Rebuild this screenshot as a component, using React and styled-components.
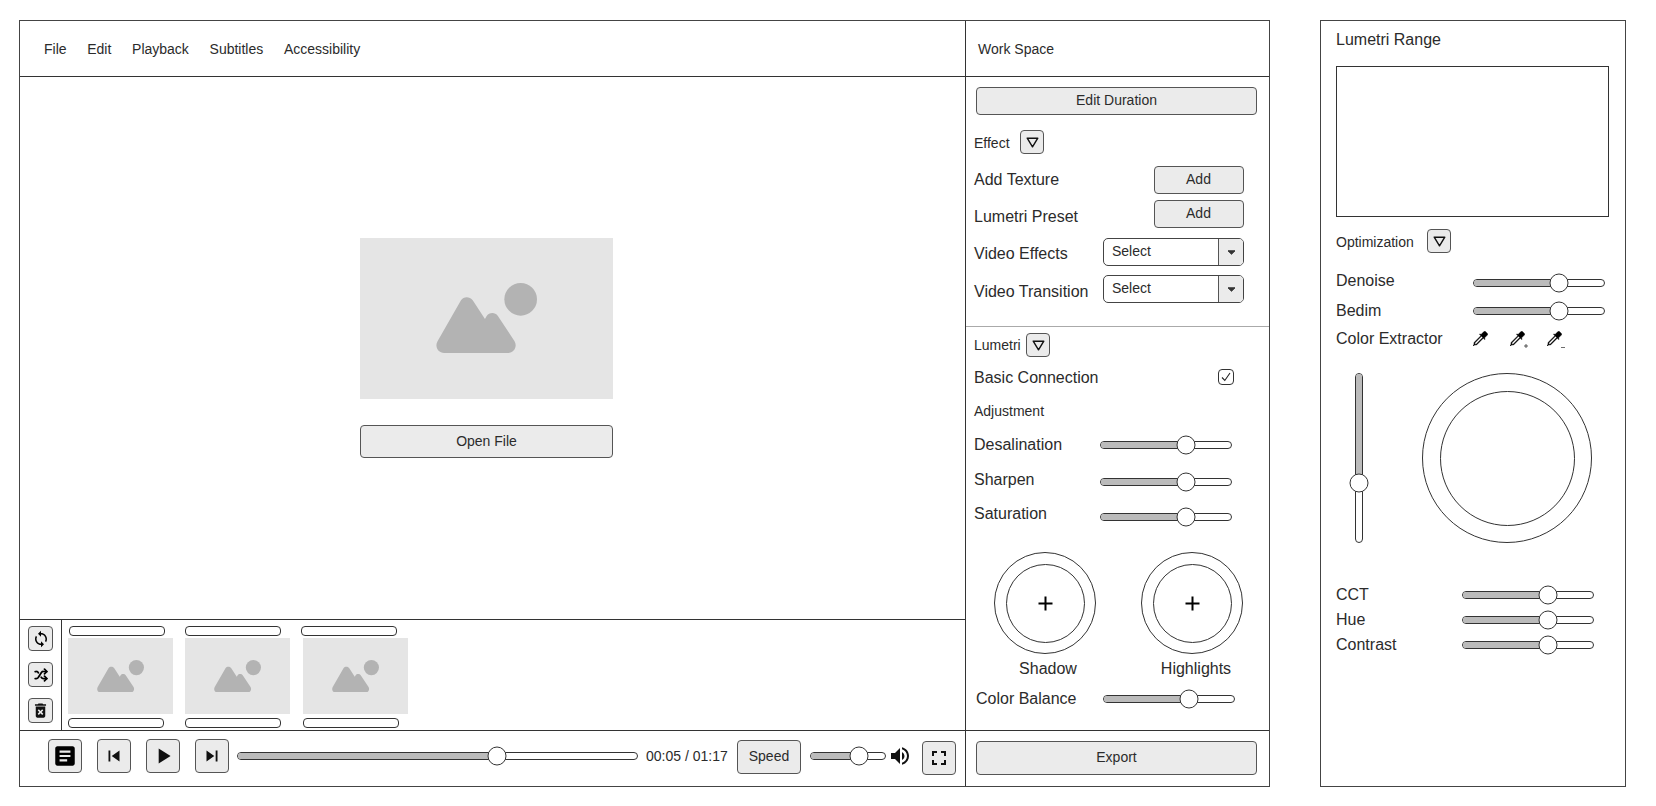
import React from "react"
import styled, { createGlobalStyle } from "styled-components"
import {
  MdSync,
  MdDeleteForever,
  MdArticle,
  MdSkipPrevious,
  MdPlayArrow,
  MdSkipNext,
  MdVolumeUp,
  MdFullscreen,
} from "react-icons/md"
import { BsEyedropper } from "react-icons/bs"
import { Shuffle } from "lucide-react"

const GlobalStyle = createGlobalStyle`
  html, body {
    margin: 0;
    padding: 0;
    background: #fff;
  }
  * {
    box-sizing: border-box;
  }
`

const Page = styled.div`
  width: 1656px;
  height: 806px;
  padding: 20px 0 0 19px;
  display: flex;
  font-family: "Liberation Sans", Arial, sans-serif;
  color: #2b2b2b;
  overflow: hidden;
`

const Frame = styled.div`
  width: 1251px;
  height: 767px;
  display: flex;
  border: 1px solid #444;
`

const LeftColumn = styled.div`
  width: 946px;
  display: flex;
  flex-direction: column;
  border-right: 1px solid #333;
`

const MenuBar = styled.nav`
  height: 56px;
  flex: none;
  display: flex;
  align-items: center;
  gap: 20.7px;
  padding-left: 24px;
  font-size: 14px;
  border-bottom: 1px solid #333;
`

const Preview = styled.div`
  height: 543px;
  flex: none;
  padding: 161px 0 0 340px;
  border-bottom: 1px solid #333;
`

const Placeholder = styled.div`
  width: ${p => p.$w}px;
  height: ${p => p.$h}px;
  background: #e5e5e5;
  display: flex;
  align-items: center;
  justify-content: center;
`

const Button = styled.button`
  display: flex;
  align-items: center;
  justify-content: center;
  padding: 0 0 ${p => p.$lift || 0}px;
  flex: none;
  font-family: inherit;
  font-size: 14px;
  color: #2b2b2b;
  background: #ebebeb;
  border: 1px solid #555;
  border-bottom-width: 1.5px;
  border-radius: 4px;
  width: ${p => p.$w}px;
  height: ${p => p.$h}px;
`

const OpenButton = styled(Button)`
  margin-top: 26px;
`

const Bin = styled.div`
  height: 111px;
  flex: none;
  display: flex;
  border-bottom: 1px solid #333;
`

const BinTools = styled.div`
  width: 42px;
  padding: 6px 0 0 8px;
  display: flex;
  flex-direction: column;
  gap: 11px;
  border-right: 1px solid #333;
`

const BinStrip = styled.div`
  display: flex;
  gap: 12.4px;
  padding: 6px 0 0 6px;
`

const Clip = styled.div`
  width: 105px;
  display: flex;
  flex-direction: column;
`

const Pill = styled.div`
  width: 96px;
  height: 10px;
  margin-left: ${p => p.$shift}px;
  border: 1px solid #333;
  border-radius: 4px;
  background: #fff;
`

const ClipImage = styled(Placeholder)`
  margin: 2px 0 4px;
`

const Transport = styled.div`
  height: 55px;
  flex: none;
  display: flex;
  align-items: flex-start;
  padding: 8px 0 0 28px;
`

const PlayButtons = styled.div`
  display: flex;
  gap: 15px;
`

const SliderSlot = styled.div`
  height: 34px;
  display: flex;
  align-items: center;
  margin-left: ${p => p.$ml}px;
`

const TimeText = styled.span`
  width: 83px;
  font-size: 14px;
  margin-left: 8px;
  white-space: nowrap;
`

const SpeedButton = styled(Button)`
  margin: 1px 0 0 8px;
`

const SpeakerSlot = styled.div`
  height: 34px;
  display: flex;
  align-items: center;
  margin-left: 2px;
  color: #111;
  font-size: 24px;
`

const FullButton = styled(Button)`
  margin: 2px 0 0 10px;
`

const Track = styled.div`
  position: relative;
  flex: none;
  width: ${p => p.$w}px;
  height: 8px;
  background: #fff;
  border: 1px solid #333;
  border-bottom-width: 1.5px;
  border-radius: 4px;
`

const TrackFill = styled.div`
  width: ${p => p.$value}%;
  height: 100%;
  background: #bbb;
  border-radius: 3px 0 0 3px;
`

const Thumb = styled.div`
  position: absolute;
  top: 50%;
  left: ${p => p.$value}%;
  width: 19px;
  height: 19px;
  transform: translate(-50%, -50%);
  background: #fff;
  border: 1px solid #333;
  border-radius: 50%;
`

const VTrack = styled.div`
  position: relative;
  flex: none;
  width: 8px;
  height: 170px;
  background: #fff;
  border: 1px solid #333;
  border-radius: 4px;
`

const VTrackFill = styled.div`
  width: 100%;
  height: ${p => p.$value}%;
  background: #bbb;
  border-radius: 3px 3px 0 0;
`

const VThumb = styled(Thumb)`
  top: ${p => p.$value}%;
  left: 50%;
`

const Sidebar = styled.aside`
  width: 303px;
  display: flex;
  flex-direction: column;
`

const SideHead = styled.div`
  height: 56px;
  flex: none;
  display: flex;
  align-items: center;
  padding-left: 12px;
  font-size: 14px;
  border-bottom: 1px solid #333;
`

const EffectSection = styled.section`
  height: 250px;
  flex: none;
  padding: 10px 0 0 8px;
  border-bottom: 1px solid #aaa;
`

const DurationButton = styled(Button)`
  margin: 0 0 15px 2px;
`

const LumetriSection = styled.section`
  height: 404px;
  flex: none;
  padding: 6px 0 0 8px;
  border-bottom: 1px solid #333;
`

const Row = styled.div`
  display: flex;
  align-items: center;
  height: ${p => p.$h}px;
  margin-top: ${p => p.$mt || 0}px;
  margin-left: ${p => p.$ml || 0}px;
`

const Label = styled.span`
  flex: none;
  width: ${p => (p.$w ? `${p.$w}px` : "auto")};
  font-size: ${p => p.$size || 16}px;
  white-space: nowrap;
  padding-top: ${p => (p.$nudge > 0 ? p.$nudge * 2 : 0)}px;
  padding-bottom: ${p => (p.$nudge < 0 ? -p.$nudge * 2 : 0)}px;
`

const Select = styled.div`
  width: 141px;
  height: 28px;
  flex: none;
  display: flex;
  border: 1px solid #444;
  border-radius: 5px;
  font-size: 14px;
  overflow: hidden;
`

const SelectValue = styled.div`
  flex: 1;
  padding: 0 0 3px 8px;
  display: flex;
  align-items: center;
`

const SelectArrow = styled.div`
  width: 25px;
  background: #ebebeb;
  border-left: 1px solid #555;
  display: flex;
  align-items: center;
  justify-content: center;
`

const Checkbox = styled.div`
  width: 16px;
  height: 16px;
  display: flex;
  align-items: center;
  justify-content: center;
  border: 1px solid #333;
  border-radius: 4px;
`

const Knobs = styled.div`
  display: flex;
  gap: 45px;
  margin: 25px 0 0 20px;
`

const Knob = styled.div`
  width: 102px;
  display: flex;
  flex-direction: column;
  align-items: center;
`

const Ring = styled.div`
  width: ${p => p.$size}px;
  height: ${p => p.$size}px;
  flex: none;
  display: flex;
  align-items: center;
  justify-content: center;
  border: 1px solid #333;
  border-radius: 50%;
`

const KnobLabel = styled.span`
  font-size: 16px;
  margin-top: 6px;
  padding-left: ${p => p.$pad}px;
  white-space: nowrap;
`

const SideFooter = styled.div`
  flex: 1;
  padding: 10px 0 0 10px;
`

const RangePanel = styled.aside`
  width: 306px;
  height: 767px;
  flex: none;
  margin-left: 50px;
  padding-left: 15px;
  border: 1px solid #444;
`

const PanelTitle = styled.div`
  height: 38px;
  display: flex;
  align-items: center;
  font-size: 16px;
`

const Scope = styled.div`
  width: 273px;
  height: 151px;
  margin-top: 7px;
  border: 1px solid #333;
`

const DropperGroup = styled.div`
  display: flex;
  gap: 21px;
`

const Dropper = styled.div`
  position: relative;
  width: 16px;
  height: 16px;
  font-size: 15px;
  line-height: 0;
  color: #000;
  > svg:first-child {
    stroke: #000;
    stroke-width: 0.4px;
  }
`

const DropperMark = styled.svg`
  position: absolute;
  right: -2px;
  bottom: -1px;
  width: 4px;
  height: 4px;
`

const WheelRow = styled.div`
  display: flex;
  margin: 24px 0 0 19px;
  gap: 59px;
`

const TriangleDown = () => (
  <svg width="13" height="11" viewBox="0 0 13 11">
    <path d="M1.2 1.2H11.8L6.5 9.8Z" fill="none" stroke="#111" strokeWidth="1.4" strokeLinejoin="round" />
  </svg>
)

const Caret = () => (
  <svg width="9" height="5" viewBox="0 0 9 5">
    <path d="M1 .8H8L4.5 4.2Z" fill="#333" stroke="#333" strokeWidth="1" strokeLinejoin="round" />
  </svg>
)

const Mountains = ({ w }) => (
  <svg width={w} height={w * 0.7} viewBox="0 0 99 69.3">
    <path
      d="M8 68.7H70C76.5 68.7 80 62.5 77 57L60.500 32C58 28.500 52 28.500 49.500 32.500L48 35.300L36 17C33 13 27 13 24.500 17L1.500 57C-1.500 62.500 2 68.700 8 68.700Z"
      fill="#b3b3b3"
    />
    <circle cx="83" cy="16" r="16" fill="#b3b3b3" />
  </svg>
)

const Plus = () => (
  <svg width="15" height="15" viewBox="0 0 15 15">
    <path d="M7.500 .5V14.500M.5 7.500H14.500" stroke="#000" strokeWidth="2" />
  </svg>
)

const Slider = ({ w = 133, value = 65 }) => (
  <Track $w={w}>
    <TrackFill $value={value} />
    <Thumb $value={value} />
  </Track>
)

const clips = [
  { id: 1, shift: 1 },
  { id: 2, shift: 0 },
  { id: 3, shift: -2 },
]

const menus = ["File", "Edit", "Playback", "Subtitles", "Accessibility"]

export default function App() {
  return (
    <Page>
      <GlobalStyle />
      <Frame>
        <LeftColumn>
          <MenuBar>
            {menus.map(m => (
              <span key={m}>{m}</span>
            ))}
          </MenuBar>
          <Preview>
            <Placeholder $w={253} $h={161}>
              <Mountains w={101} />
            </Placeholder>
            <OpenButton $w={253} $h={33} $lift={1}>Open File</OpenButton>
          </Preview>
          <Bin>
            <BinTools>
              <Button $w={25} $h={25}><MdSync size={18} color="#000" /></Button>
              <Button $w={25} $h={25}><Shuffle size={14} color="#000" strokeWidth={3} /></Button>
              <Button $w={25} $h={25}><MdDeleteForever size={19} color="#111" /></Button>
            </BinTools>
            <BinStrip>
              {clips.map(c => (
                <Clip key={c.id}>
                  <Pill $shift={c.shift} />
                  <ClipImage $w={105} $h={76}>
                    <Mountains w={47} />
                  </ClipImage>
                  <Pill $shift={0} />
                </Clip>
              ))}
            </BinStrip>
          </Bin>
          <Transport>
            <PlayButtons>
              <Button $w={34} $h={34}><MdArticle size={26} color="#000" /></Button>
              <Button $w={34} $h={34}><MdSkipPrevious size={22} color="#111" /></Button>
              <Button $w={34} $h={34}><MdPlayArrow size={26} color="#111" /></Button>
              <Button $w={34} $h={34}><MdSkipNext size={22} color="#111" /></Button>
            </PlayButtons>
            <SliderSlot $ml={8}>
              <Slider w={401} />
              <TimeText>00:05 / 01:17</TimeText>
            </SliderSlot>
            <SpeedButton $w={64} $h={34} $lift={2}>Speed</SpeedButton>
            <SliderSlot $ml={9}>
              <Slider w={76} />
            </SliderSlot>
            <SpeakerSlot><MdVolumeUp /></SpeakerSlot>
            <FullButton $w={34} $h={34}><MdFullscreen size={24} color="#111" /></FullButton>
          </Transport>
        </LeftColumn>
        <Sidebar>
          <SideHead>Work Space</SideHead>
          <EffectSection>
            <DurationButton $w={281} $h={28} $lift={2}>Edit Duration</DurationButton>
            <Row $h={24}>
              <Label $size={14} $w={46} $nudge={1}>Effect</Label>
              <Button $w={24} $h={24}><TriangleDown /></Button>
            </Row>
            <Row $h={28} $mt={12}>
              <Label $w={179.5}>Add Texture</Label>
              <Button $w={90} $h={28} $lift={2}>Add</Button>
            </Row>
            <Row $h={28} $mt={6}>
              <Label $w={179.5} $nudge={3}>Lumetri Preset</Label>
              <Button $w={90} $h={28} $lift={2}>Add</Button>
            </Row>
            <Row $h={28} $mt={10}>
              <Label $w={129} $nudge={2}>Video Effects</Label>
              <Select>
                <SelectValue>Select</SelectValue>
                <SelectArrow><Caret /></SelectArrow>
              </Select>
            </Row>
            <Row $h={28} $mt={9}>
              <Label $w={129} $nudge={3}>Video Transition</Label>
              <Select>
                <SelectValue>Select</SelectValue>
                <SelectArrow><Caret /></SelectArrow>
              </Select>
            </Row>
          </EffectSection>
          <LumetriSection>
            <Row $h={24}>
              <Label $size={14} $w={52}>Lumetri</Label>
              <Button $w={24} $h={24}><TriangleDown /></Button>
            </Row>
            <Row $h={20} $mt={10}>
              <Label $w={244} $nudge={1}>Basic Connection</Label>
              <Checkbox>
                <svg width="10" height="10" viewBox="0 0 10 10">
                  <path d="M1 5.500L3.800 8.500L9 1" fill="none" stroke="#222" strokeWidth="1.100" />
                </svg>
              </Checkbox>
            </Row>
            <Row $h={20} $mt={14}>
              <Label $size={14}>Adjustment</Label>
            </Row>
            <Row $h={20} $mt={14}>
              <Label $w={126}>Desalination</Label>
              <Slider w={132} />
            </Row>
            <Row $h={20} $mt={17}>
              <Label $w={126} $nudge={-2}>Sharpen</Label>
              <Slider w={132} />
            </Row>
            <Row $h={20} $mt={15}>
              <Label $w={126} $nudge={-3}>Saturation</Label>
              <Slider w={132} />
            </Row>
            <Knobs>
              <Knob>
                <Ring $size={102}>
                  <Ring $size={79}><Plus /></Ring>
                </Ring>
                <KnobLabel $pad={6}>Shadow</KnobLabel>
              </Knob>
              <Knob>
                <Ring $size={102}>
                  <Ring $size={79}><Plus /></Ring>
                </Ring>
                <KnobLabel $pad={8}>Highlights</KnobLabel>
              </Knob>
            </Knobs>
            <Row $h={20} $mt={11} $ml={2}>
              <Label $w={127}>Color Balance</Label>
              <Slider w={132} />
            </Row>
          </LumetriSection>
          <SideFooter>
            <Button $w={281} $h={34} $lift={2}>Export</Button>
          </SideFooter>
        </Sidebar>
      </Frame>
      <RangePanel>
        <PanelTitle>Lumetri Range</PanelTitle>
        <Scope />
        <Row $h={24} $mt={12}>
          <Label $size={14} $w={91} $nudge={1}>Optimization</Label>
          <Button $w={24} $h={24}><TriangleDown /></Button>
        </Row>
        <Row $h={20} $mt={20}>
          <Label $w={137} $nudge={-2}>Denoise</Label>
          <Slider w={132} />
        </Row>
        <Row $h={20} $mt={8}>
          <Label $w={137}>Bedim</Label>
          <Slider w={132} />
        </Row>
        <Row $h={20} $mt={8}>
          <Label $w={137}>Color Extractor</Label>
          <DropperGroup>
            <Dropper><BsEyedropper /></Dropper>
            <Dropper>
              <BsEyedropper />
              <DropperMark viewBox="0 0 5 5">
                <path d="M2.500 0V5M0 2.500H5" stroke="#333" strokeWidth="1" />
              </DropperMark>
            </Dropper>
            <Dropper>
              <BsEyedropper />
              <DropperMark viewBox="0 0 5 5">
                <path d="M0 4.500H5" stroke="#333" strokeWidth="1" />
              </DropperMark>
            </Dropper>
          </DropperGroup>
        </Row>
        <WheelRow>
          <VTrack>
            <VTrackFill $value={65} />
            <VThumb $value={65} />
          </VTrack>
          <Ring $size={170}>
            <Ring $size={135} />
          </Ring>
        </WheelRow>
        <Row $h={20} $mt={42}>
          <Label $w={126}>CCT</Label>
          <Slider w={132} />
        </Row>
        <Row $h={20} $mt={5}>
          <Label $w={126}>Hue</Label>
          <Slider w={132} />
        </Row>
        <Row $h={20} $mt={5}>
          <Label $w={126}>Contrast</Label>
          <Slider w={132} />
        </Row>
      </RangePanel>
    </Page>
  )
}
